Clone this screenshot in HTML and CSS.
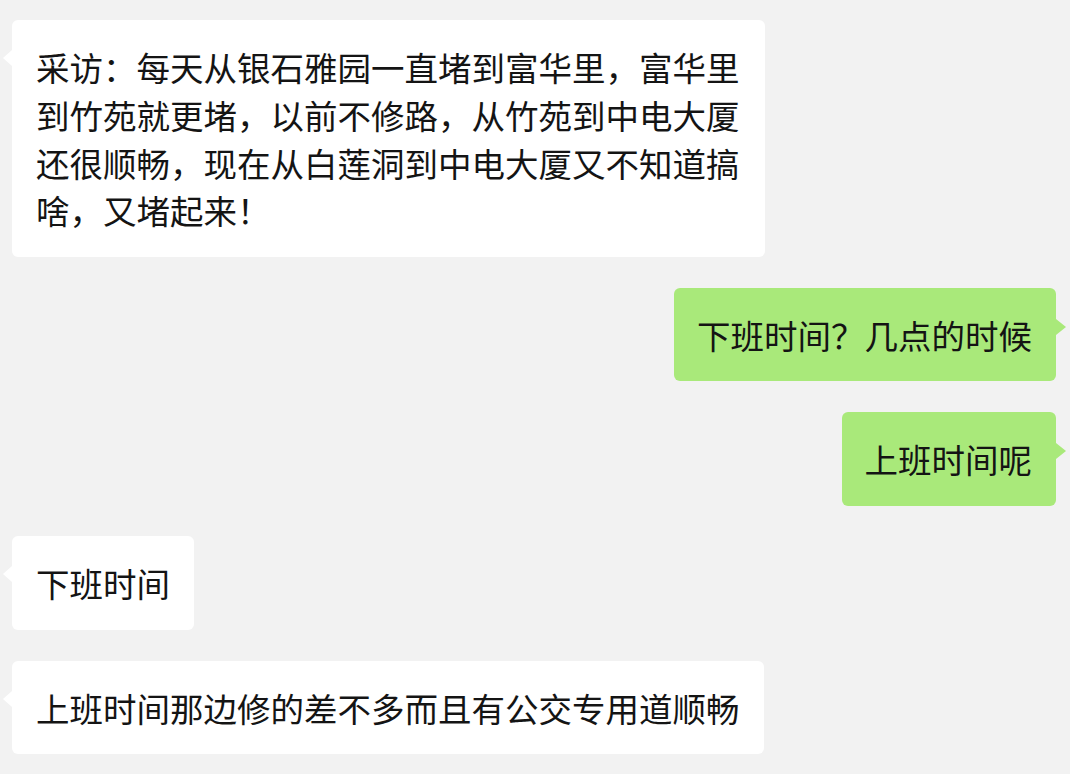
FILE: index.html
```html
<!DOCTYPE html>
<html lang="zh-CN">
<head>
<meta charset="utf-8">
<title>聊天</title>
<link rel="stylesheet" href="styles.css">
</head>
<body>
<div class="chat">
  <div class="bubble left wide">采访：每天从银石雅园一直堵到富华里，富华里到竹苑就更堵，以前不修路，从竹苑到中电大厦还很顺畅，现在从白莲洞到中电大厦又不知道搞啥，又堵起来！</div>
  <div class="bubble right">下班时间？几点的时候</div>
  <div class="bubble right">上班时间呢</div>
  <div class="bubble left">下班时间</div>
  <div class="bubble left">上班时间那边修的差不多而且有公交专用道顺畅</div>
</div>
</body>
</html>
```
FILE: styles.css
```css
html, body {
  margin: 0;
  padding: 0;
  background: #f2f2f2;
}
body {
  width: 1070px;
  height: 774px;
  overflow: hidden;
  font-family: "Noto Sans CJK SC", "Noto Sans", sans-serif;
}
.chat {
  display: flex;
  flex-direction: column;
  align-items: flex-start;
  gap: 30.5px;
  padding: 20px 14px 0 12px;
}
.bubble {
  position: relative;
  box-sizing: border-box;
  max-width: 753px;
  padding: 23px 24px 23px 24px;
  font-size: 33.5px;
  line-height: 47.8px;
  color: #141414;
  border-radius: 6px;
  background: #ffffff;
}
.bubble.right {
  align-self: flex-end;
  background: #a9e97a;
  padding: 23px 24px 23px 23px;
}
.bubble::before {
  content: "";
  position: absolute;
  top: 30px;
  width: 0;
  height: 0;
  border-top: 8px solid transparent;
  border-bottom: 8px solid transparent;
}
.bubble.left::before {
  left: -9px;
  border-right: 9px solid #ffffff;
}
.bubble.right::before {
  right: -10px;
  border-left: 10px solid #a9e97a;
  top: 31px;
}
```
